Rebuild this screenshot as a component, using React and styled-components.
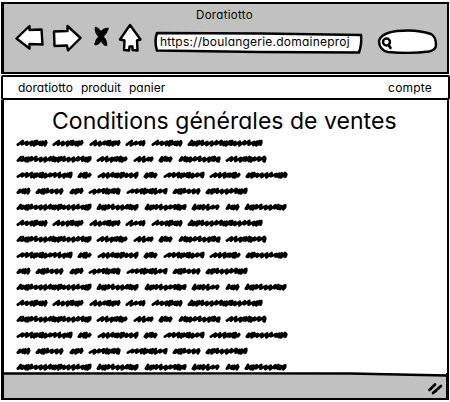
import React from "react";
import styled, { createGlobalStyle } from "styled-components";

const GlobalStyle = createGlobalStyle`
  * { box-sizing: border-box; }
  body { margin: 0; background: #fff; overflow: hidden; }
`;
const Page = styled.div`
  width: 450px;
  height: 402px;
  padding: 2px 1px 0 1px;
  background: #fff;
  color: #000;
  font-family: Inter, sans-serif;
  font-feature-settings: "cv11";
  font-size: 12px;
  display: flex;
  flex-direction: column;
`;
const Chrome = styled.header`
  height: 72px;
  flex: none;
  width: 448px;
  border: 2px solid #000;
  border-left-width: 3px;
  background: #c1c1c1;
`;
const WindowTitle = styled.div`
  height: 22px;
  line-height: 22px;
  padding-right: 2px;
  text-align: center;
  font-size: 11.5px;
  letter-spacing: 0.3px;
`;
const Toolbar = styled.div`
  display: flex;
  align-items: flex-start;
  padding-left: 11px;
`;
const Drawing = styled.svg`
  display: block;
  flex: none;
  overflow: visible;
  fill: #fff;
  stroke: #000;
  stroke-width: 2.4;
  stroke-linejoin: round;
  stroke-linecap: round;
`;
const NavIcons = styled(Drawing)`
  margin-top: -2px;
`;
const Address = styled.div`
  display: grid;
  width: 210px;
  height: 24px;
  margin: 5px 0 0 10px;
  & > * { grid-area: 1 / 1; }
`;
const Url = styled.span`
  padding-left: 6px;
  line-height: 21px;
  font-size: 12px;
  white-space: nowrap;
  letter-spacing: 0.22px;
  z-index: 1;
`;
const SearchBox = styled.div`
  margin: 2px 0 0 13px;
`;
const Nav = styled.nav`
  flex: none;
  width: 449px;
  height: 25px;
  margin: 1px 0 0 0;
  border: 2px solid #000;
  border-radius: 2px;
  display: flex;
  align-items: center;
  padding: 0 16px 0 15px;
  gap: 8px;
`;
const Link = styled.span`
  font-size: 12px;
  line-height: 20px;
  letter-spacing: ${(p) => p.$spacing || 0}px;
  margin-left: ${(p) => (p.$end ? "auto" : "0")};
`;
const Content = styled.main`
  height: 273px;
  flex: none;
  width: 448px;
  border: solid #000;
  border-width: 0 2px 0 3px;
  padding: 5px 0 0 12px;
`;
const Heading = styled.h1`
  height: 30px;
  margin: 0 0 0 36px;
  font-size: 23px;
  font-weight: 400;
  line-height: 32px;
  letter-spacing: 0.03px;
  white-space: nowrap;
`;
const Line = styled.div`
  height: 16px;
  display: flex;
  gap: 4.4px;
`;
const Footer = styled.footer`
  height: 27px;
  flex: none;
  width: 448px;
  border: solid #000;
  border-width: 0 3px 2px 3px;
  background: #c1c1c1;
  display: grid;
  & > * { grid-area: 1 / 1; }
`;
const Grip = styled(Drawing)`
  justify-self: end;
  margin: 8px 2px 0 0;
`;

// Widths of the scribbled words in one repeating paragraph.
const lines = [
  [32, 32, 32, 21, 32, 76],
  [76, 32, 21, 15, 43, 42],
  [57, 15, 42, 15, 42, 32, 43],
  [15, 29, 15, 33, 42, 29, 43],
  [76, 43, 43, 29, 15, 43],
];

// Pen steps between strokes: loose waves followed by tight ones.
const steps = [4.9, 4.5, 4.8, 3, 2.2, 3.4, 2.1, 3.2, 4.6];

function scribble(width, row, index) {
  const end = width - 1.7;
  const offset = width === 15 || width === 29 || width === 43 ? 4 : width > 70 ? 3 : 0;
  let x = 1.8;
  let i = 0;
  let d = "M1.8 9.6";
  while (x < end - 0.8) {
    const step = steps[(i + offset) % steps.length];
    const top = 6 + ((i * 3 + row) % 4) * 0.3;
    const bottom = 9.3 + ((i * 5 + index) % 4) * 0.4;
    x = Math.min(x + step, end);
    d += ` L${x.toFixed(1)} ${top.toFixed(1)} L${(x - 0.9).toFixed(1)} ${bottom.toFixed(1)}`;
    i += 1;
  }
  return `${d} L${end.toFixed(1)} 7.6`;
}
const Pen = styled.path`
  fill: none;
  stroke-width: ${(p) => p.$weight || 2.7}px;
`;
function Word({ width, row, index }) {
  return (
    <Drawing width={width} height="15" viewBox={`0 0 ${width} 15`}>
      <Pen d={scribble(width, row, index)} />
    </Drawing>
  );
}

export default function App() {
  return (
    <Page>
      <GlobalStyle />
      <Chrome>
        <WindowTitle>Doratiotto</WindowTitle>
        <Toolbar>
          <NavIcons width="129" height="30" viewBox="15 24 129 30">
            <path d="M16.500 38.500 29.500 26v4l12-.5 1 15-13-.5v4.500Z" />
            <path d="M54 31.500 67.500 31v-5L80.500 38 68 50.500 67 45.500l-12.500.5Z" />
            <path d="M95.500 27.500q3.500 1 5.500 5 2-4 7-4-1 4-5 8 4 5 3.500 8.500-2 1-5.500-5-3 5-6 4.500 1-5 4-8-4-4-3.500-9Z" fill="#000" strokeWidth="1.5" />
            <path d="m130 25 10.500 14.500-3.500 1 .5 10-5-.5v-3.500h-3l-.5 4-5-.5.500-9.500-4.500-1Z" />
          </NavIcons>
          <Address>
            <Drawing width="210" height="24" viewBox="0 0 210 24">
              <path d="M3 2 108 2.500l99 1.500q1 9-2 17.500l-100-.5L3 19.500Q0 10 3 2Z" strokeWidth="2.500" />
            </Drawing>
            <Url>https://boulangerie.domaineproj</Url>
          </Address>
          <SearchBox>
            <Drawing width="60" height="26" viewBox="377 28 60 26">
              <path d="M379 41q2-8 18-10 20-2 34 3 5 3 5 11 0 5-7 6.500-17 2.500-41 .5-9-2-9-11Z" />
              <circle cx="386.500" cy="42" r="3.500" />
              <Pen d="m388.500 45 2 3" />
            </Drawing>
          </SearchBox>
        </Toolbar>
      </Chrome>
      <Nav>
        <Link>doratiotto</Link>
        <Link>produit</Link>
        <Link>panier</Link>
        <Link $end $spacing={0.2}>compte</Link>
      </Nav>
      <Content>
        <Heading>Conditions générales de ventes</Heading>
        {Array.from({ length: 15 }, (_, row) => (
          <Line key={row}>
            {lines[row % 5].map((width, index) => (
              <Word key={index} width={width} row={row % 5} index={index} />
            ))}
          </Line>
        ))}
      </Content>
      <Footer>
        <Drawing width="442" height="6" viewBox="4 373 442 6">
          <path d="M4 373H446V375.500L350 374Z" stroke="none" />
          <Pen $weight={2.3} d="M3 373.500 225 373.300 350 373.500 447 375.500" />
        </Drawing>
        <Grip width="16" height="14" viewBox="428 381 16 14">
          <Pen d="m429.500 390 5.500-5.500M433 393l8-7M433 393l3-2" />
        </Grip>
      </Footer>
    </Page>
  );
}
